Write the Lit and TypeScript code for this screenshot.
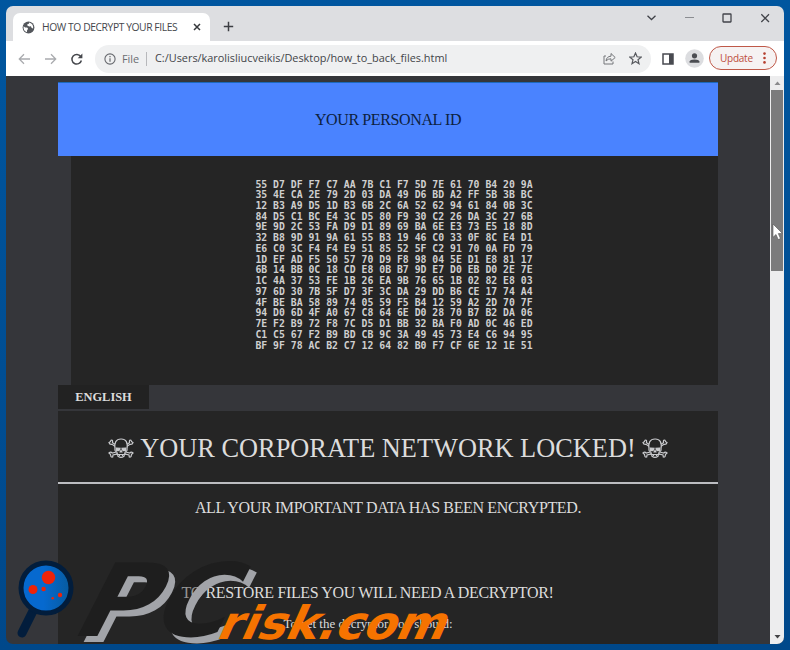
import { LitElement, html, css } from "lit";
import { customElement } from "lit/decorators.js";

const ID_ROWS = [
  "55 D7 DF F7 C7 AA 7B C1 F7 5D 7E 61 70 B4 20 9A",
  "35 4E CA 2E 79 2D 03 DA 49 D6 BD A2 FF 5B 3B BC",
  "12 B3 A9 D5 1D B3 6B 2C 6A 52 62 94 61 84 0B 3C",
  "84 D5 C1 BC E4 3C D5 80 F9 30 C2 26 DA 3C 27 6B",
  "9E 9D 2C 53 FA D9 D1 89 69 BA 6E E3 73 E5 18 8D",
  "32 B8 9D 91 9A 61 55 B3 19 46 C0 33 0F 8C E4 D1",
  "E6 C0 3C F4 F4 E9 51 85 52 5F C2 91 70 0A FD 79",
  "1D EF AD F5 50 57 70 D9 F8 98 04 5E D1 E8 81 17",
  "6B 14 BB 0C 18 CD E8 0B B7 9D E7 D0 EB D0 2E 7E",
  "1C 4A 37 53 FE 1B 26 EA 9B 76 65 1B 02 82 E8 03",
  "97 6D 30 7B 5F D7 3F 3C DA 29 DD B6 CE 17 74 A4",
  "4F BE BA 58 89 74 05 59 F5 B4 12 59 A2 2D 70 7F",
  "94 D0 6D 4F A0 67 C8 64 6E D0 28 70 B7 B2 DA 06",
  "7E F2 B9 72 F8 7C D5 D1 BB 32 BA F0 AD 0C 46 ED",
  "C1 C5 67 F2 B9 BD CB 9C 3A 49 45 73 E4 C6 94 95",
  "BF 9F 78 AC B2 C7 12 64 82 B0 F7 CF 6E 12 1E 51",
];

@customElement("browser-tabs")
class BrowserTabs extends LitElement {
  static styles = css`
    :host { display: flex; height: 35px; background: #dddee1; font: 10.3px "Open Sans", "Noto Sans", sans-serif; color: #45474c; }
    .tab { box-sizing: border-box; display: flex; align-items: center; width: 197px; height: 28px; margin: 7px 0 0 7px; padding-left: 9px; background: #fff; border-radius: 7px 7px 0 0; }
    .title { margin-left: 7px; margin-top: -1px; white-space: nowrap; letter-spacing: -0.42px; width: 134px; }
    .close { margin-left: 17px; }
    .plus { margin: 15px 0 0 13px; }
    .spacer { flex: 1; }
    .controls { display: flex; margin-top: 4px; }
    svg { display: block; flex: none; }
  `;
  render() {
    return html`
      <div class="tab">
        <svg width="13" height="13" viewBox="0 0 13 13"><circle cx="6.5" cy="6.5" r="5.9" fill="#54575c"/><path d="M1.6 5.3 3.1 6.5 5.2 6.6 6.2 8 5.1 9.1 5 11.2 Q1.9 10.2 1.6 7Z M7.3 1.5 6.6 3 5.3 3.3 5.3 4.5 7.2 5.5 8.9 5.2 9.7 7.1 11.1 7.4 Q11.8 3 7.3 1.5Z" fill="#fff"/></svg>
        <span class="title">HOW TO DECRYPT YOUR FILES</span>
        <svg class="close" width="8" height="8" viewBox="0 0 8 8"><path d="M1 1 7 7M7 1 1 7" stroke="#36383c" stroke-width="1.5"/></svg>
      </div>
      <svg class="plus" width="11" height="11" viewBox="0 0 11 11"><path d="M5.5 .8V10.2M.8 5.5H10.2" stroke="#3c3e43" stroke-width="1.5"/></svg>
      <div class="spacer"></div>
      <svg class="controls" width="150" height="16" viewBox="634 10 150 16" fill="none" stroke="#414349">
        <path d="M647.5 15.8 651.5 19.5 655.5 15.8" stroke-width="1.3"/>
        <path d="M685 17.5H694" stroke="#8b8d91"/>
        <rect x="723" y="14" width="8" height="8" rx=".5" stroke-width="1.3"/>
        <path d="M761.3 14.3 769 22M769 14.3 761.3 22" stroke-width="1.3"/>
      </svg>`;
  }
}

@customElement("browser-toolbar")
class BrowserToolbar extends LitElement {
  static styles = css`
    :host { display: flex; align-items: center; height: 35px; background: #fff; font: 10.9px "Open Sans", "Noto Sans", sans-serif; color: #424448; }
    svg { display: block; flex: none; }
    .nav { margin-left: 12px; }
    .address { box-sizing: border-box; display: flex; align-items: center; width: 556px; height: 28px; margin-left: 11px; padding: 0 9px; background: #eff0f1; border-radius: 14px; white-space: nowrap; }
    .file { width: 18px; margin: -1px 0 0 6px; color: #6b6d71; }
    .divider { width: 1px; height: 14px; margin: 0 8px 0 6px; background: #b7b8bb; }
    .url { flex: 1; margin-top: -2px; }
    .star { margin-left: 13px; }
    .panel { margin-left: 11px; }
    .avatar { margin-left: 11px; }
    .update { box-sizing: border-box; display: flex; align-items: center; justify-content: space-between; width: 68px; height: 24px; margin-left: 5px; margin-top: -1px; padding: 0 10px; border: 1px solid #bf5848; border-radius: 12px; background: #f6f2f2; color: #bd4d3c; font-size: 10px; }
    .update span { letter-spacing: -0.25px; }
  `;
  render() {
    return html`
      <svg class="nav" width="66" height="14" viewBox="0 0 66 14" fill="none" stroke-width="1.3">
        <path d="M12 7H1.5M6 2.3 1.3 7 6 11.7M27 7H37.5M33 2.3 37.7 7 33 11.7" stroke="#a9abae"/>
        <path d="M62.7 4.5A4.8 4.8 0 1 0 63.4 8.5" stroke="#46484d" stroke-width="1.5"/>
        <path d="M64.4 1.5V6.2H59.7Z" fill="#46484d"/>
      </svg>
      <div class="address">
        <svg width="12" height="12" viewBox="0 0 12 12"><circle cx="6" cy="6" r="5.1" fill="none" stroke="#66686d" stroke-width="1.1"/><path d="M6 5.3V8.8M6 3V4.3" stroke="#66686d" stroke-width="1.2"/></svg>
        <span class="file">File</span><i class="divider"></i>
        <span class="url">C:/Users/karolisliucveikis/Desktop/how_to_back_files.html</span>
        <svg width="13" height="13" viewBox="0 0 13 13" fill="none" stroke="#74767a"><path d="M3 4H1V12H10V9.5"/><path d="M3 9Q3.5 4.4 8 4.2V1.5L12.2 5.5 8 9.2V6.8Q5 6.6 3 9Z"/></svg>
        <svg class="star" width="13" height="13" viewBox="0 0 13 13"><path d="M6.5 1 8.1 4.8 12.1 5.1 9 7.7 10 11.7 6.5 9.5 3 11.7 4 7.7 .9 5.1 4.9 4.8Z" fill="none" stroke="#57595e" stroke-width="1.2"/></svg>
      </div>
      <svg class="panel" width="12" height="12" viewBox="0 0 12 12"><rect x="1" y="1" width="10" height="10" fill="none" stroke="#484a50" stroke-width="1.5"/><rect x="7" y="1" width="4" height="10" fill="#484a50"/></svg>
      <svg class="avatar" width="19" height="19" viewBox="0 0 19 19"><circle cx="9.5" cy="9.5" r="9.3" fill="#dcdde0"/><circle cx="9.5" cy="6.8" r="2.6" fill="#4b4d52"/><path d="M4.6 13.8V12.4Q5 10.4 9.5 10.4T14.4 12.4V13.8Z" fill="#4b4d52"/></svg>
      <div class="update"><span>Update</span><svg width="3" height="12" viewBox="0 0 3 12" fill="#b64030"><circle cx="1.5" cy="1.6" r="1.3"/><circle cx="1.5" cy="6" r="1.3"/><circle cx="1.5" cy="10.4" r="1.3"/></svg></div>`;
  }
}

const skull = html`<svg width="26" height="21" viewBox="0 0 26 21" fill="none" stroke="#c9cacd" stroke-width="1.2">
  <path d="M7 11Q5.5 1.2 13 1T19 11Q19.5 13 17 14.2V16.5H9V14.2Q6.5 13 7 11Z"/>
  <path d="M8.3 10 12 10.3 11 12.6 8.6 12.4ZM17.7 10 14 10.3 15 12.6 17.4 12.4ZM12.2 14 13 12.4 13.8 14Z" fill="#c9cacd"/>
  <path d="M9.5 15.5 10 18.3Q13 20.5 16 18.3L16.5 15.5M11.5 16V18M14.5 16V18"/>
  <path d="M7 6.3 4.5 4.7Q5 1.3 3 2.3 2.8 4 1 4.6 1.5 6.6 4 6.3L6.9 8.3M19 6.3 21.5 4.7Q21 1.3 23 2.3 23.2 4 25 4.6 24.5 6.6 22 6.3L19.1 8.3M8.4 14 4.2 15Q2.8 13.4 1 15 2.7 16.2 2.7 17.2 2.8 19.6 4.7 19L5 17 9.5 15.8M17.6 14 21.8 15Q23.2 13.4 25 15 23.3 16.2 23.3 17.2 23.2 19.6 21.3 19L21 17 16.5 15.8"/>
</svg>`;

@customElement("note-page")
class NotePage extends LitElement {
  static styles = css`
    :host { display: flex; height: 568px; overflow: hidden; background: #35363a; font-family: "Liberation Serif", "Times New Roman", serif; color: #dcdcdc; }
    .page { width: 660px; margin: 6px 52px 0; }
    .heading { display: flex; align-items: center; justify-content: center; height: 74px; background: #4a83ff; color: #0d2140; font-size: 16px; letter-spacing: -0.38px; box-shadow: inset 0 1px #1c69bd; }
    .heading span { margin-top: 2px; }
    .id { box-sizing: border-box; height: 229px; margin: 0 0 0 13px; padding: 23.5px 1px 0 0; background: #252525; font: bold 9.8px/10.73px "DejaVu Sans Mono", monospace; text-align: center; white-space: pre; color: #cfcfcf; }
    .lang { display: flex; align-items: center; justify-content: center; width: 91px; height: 24px; background: #222; font-size: 12.4px; font-weight: bold; margin-bottom: 2px; }
    .body { height: 240px; background: #252525; text-align: center; white-space: nowrap; }
    .title { display: flex; align-items: center; justify-content: center; gap: 6px; box-sizing: border-box; height: 73px; padding-top: 4px; border-bottom: 2px solid #bcbdc1; font-size: 26.35px; }
    .line { font-size: 16px; letter-spacing: -0.36px; line-height: 20px; padding-top: 14px; }
    .restore { padding: 65px 41px 0 0; }
    .get { font-size: 13px; line-height: 16px; padding: 13px 40px 0 0; }
    .scroll { display: flex; flex-direction: column; align-items: center; width: 14px; background: #ededee; }
    .thumb { width: 12px; height: 181px; margin: 5px 0 auto; background: #7b7b7c; }
    .scroll svg { display: block; flex: none; }
    .up { margin-top: 5px; }
    .down { margin-bottom: 5px; }
  `;
  render() {
    return html`
      <main class="page">
        <div class="heading"><span>YOUR PERSONAL ID</span></div>
        <div class="id">${ID_ROWS.map((row) => html`<div>${row}</div>`)}</div>
        <div class="lang">ENGLISH</div>
        <div class="body">
          <div class="title">${skull}<span>YOUR CORPORATE NETWORK LOCKED!</span>${skull}</div>
          <div class="line">ALL YOUR IMPORTANT DATA HAS BEEN ENCRYPTED.</div>
          <div class="line restore">TO RESTORE FILES YOU WILL NEED A DECRYPTOR!</div>
          <div class="get">To get the decryptor you should:</div>
        </div>
      </main>
      <div class="scroll">
        <svg class="up" width="7" height="4"><path d="M.5 4 3.5 .5 6.5 4Z" fill="#8a8a8c"/></svg>
        <div class="thumb"></div>
        <svg class="down" width="7" height="4"><path d="M.5 0 3.5 3.5 6.5 0Z" fill="#434345"/></svg>
      </div>`;
  }
}

@customElement("pcrisk-mark")
class PcriskMark extends LitElement {
  static styles = css`
    :host { display: block; }
    svg { display: block; overflow: visible; }
    .pc { font: bold 101px "DejaVu Sans", sans-serif; }
    .risk { font: bold 46px "DejaVu Sans", sans-serif; fill: #f67300; }
  `;
  render() {
    return html`<svg width="450" height="90" viewBox="10 554 450 90">
      <defs>
        <linearGradient id="lens"><stop offset=".45" stop-color="#0669cf"/><stop offset="1" stop-color="#075a9d"/></linearGradient>
        <mask id="rim" maskUnits="userSpaceOnUse" x="40" y="540" width="260" height="110">
          <rect x="40" y="540" width="260" height="110" fill="#fff"/>
          <text class="pc" transform="translate(68 636) skewX(-27)" textLength="154" lengthAdjust="spacingAndGlyphs" fill="#000">PC</text>
        </mask>
      </defs>
      <path d="M34 609 22 633" stroke="#021d3c" stroke-width="9" stroke-linecap="round"/>
      <circle cx="46" cy="588" r="25" fill="url(#lens)" stroke="#021d3c" stroke-width="5"/>
      <g fill="#ed2309"><circle cx="48.5" cy="577.5" r="6.7"/><circle cx="33" cy="589.5" r="4.5"/><circle cx="43.6" cy="589" r="2.2"/><circle cx="60" cy="595" r="2.2"/><circle cx="52.7" cy="598.3" r="1.3"/></g>
      <text class="pc" transform="translate(68 636) skewX(-27)" textLength="154" lengthAdjust="spacingAndGlyphs" fill="#111" fill-opacity=".35">PC</text>
      <g mask="url(#rim)">
        <text class="pc" transform="translate(74 642) skewX(-27)" textLength="154" lengthAdjust="spacingAndGlyphs" fill="#a2a4a9">PC</text>
      </g>
      <text class="risk" transform="translate(215 639) skewX(-24)" textLength="228" lengthAdjust="spacingAndGlyphs">risk.com</text>
    </svg>`;
  }
}

@customElement("app-root")
class AppRoot extends LitElement {
  static styles = css`
    :host { display: block; position: relative; box-sizing: border-box; width: 790px; height: 650px; padding: 6px; background: linear-gradient(#00569f, #00488a); overflow: hidden; }
    .window { width: 778px; height: 638px; border-radius: 7px; overflow: hidden; }
    .logo { position: absolute; left: 10px; top: 554px; }
    .pointer { position: absolute; left: 772px; top: 223px; }
  `;
  render() {
    return html`
      <div class="window"><browser-tabs></browser-tabs><browser-toolbar></browser-toolbar><note-page></note-page></div>
      <pcrisk-mark class="logo"></pcrisk-mark>
      <svg class="pointer" width="12" height="18" viewBox="0 0 12 18"><path d="M1 1V14.3L4 11.5 6.2 16.6 8.5 15.6 6.3 10.6 10.4 10.4Z" fill="#fff" stroke="#555" stroke-width=".6"/></svg>`;
  }
}
